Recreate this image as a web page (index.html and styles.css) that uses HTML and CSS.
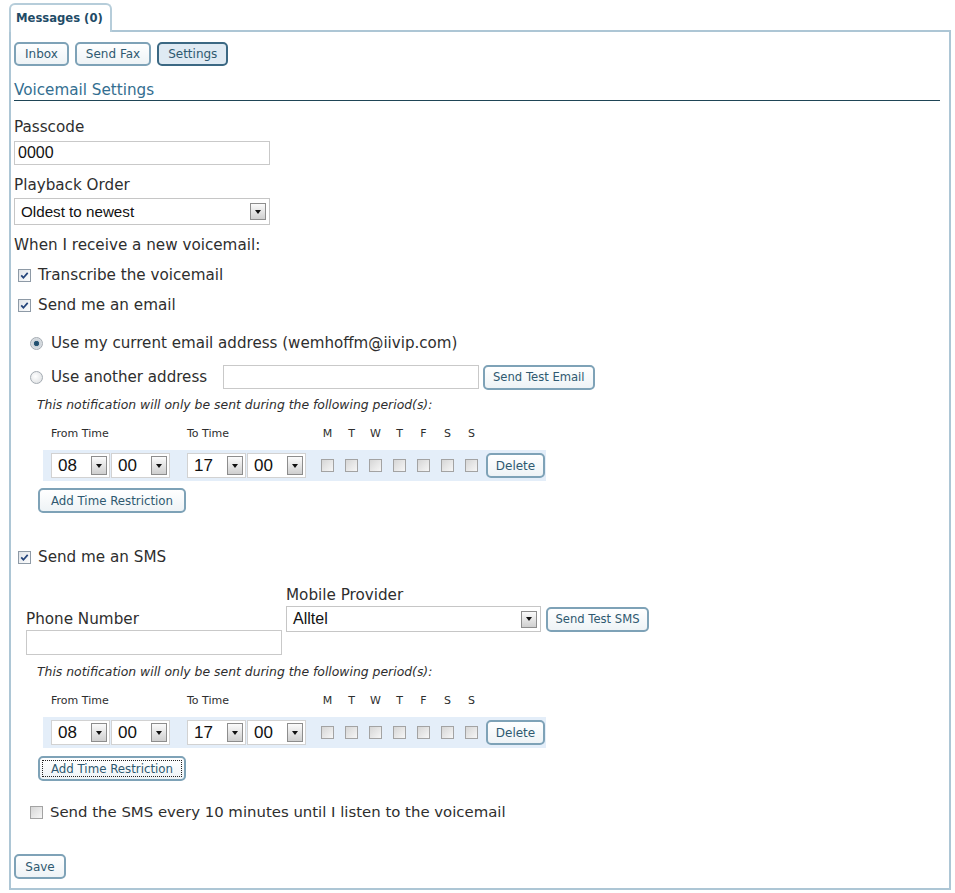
FILE: index.html
```html
<!DOCTYPE html>
<html>
<head>
<meta charset="utf-8">
<title>Voicemail Settings</title>
<link rel="stylesheet" href="styles.css">
</head>
<body>
<div class="page">
  <div class="tabs"><div class="tab">Messages (0)</div></div>
  <div class="panel">
    <div class="subnav">
      <button class="btn">Inbox</button>
      <button class="btn">Send Fax</button>
      <button class="btn active">Settings</button>
    </div>
    <h2 class="section-title">Voicemail Settings</h2>

    <div class="lbl mt16">Passcode</div>
    <div class="textbox mt4 tb-pass">0000</div>
    <div class="lbl mt10">Playback Order</div>
    <div class="select mt3 sel-play"><span>Oldest to newest</span><span class="arrow"><i></i></span></div>
    <div class="lbl mt10">When I receive a new voicemail:</div>

    <div class="cbrow mt10 pl4"><span class="cb"><svg viewBox="0 0 13 13" width="13" height="13"><path d="M3.2 6.4 L5.4 8.7 L9.7 3.9" fill="none" stroke="#23437a" stroke-width="1.7"/></svg></span><span class="cbtext">Transcribe the voicemail</span></div>
    <div class="cbrow mt10 pl4"><span class="cb"><svg viewBox="0 0 13 13" width="13" height="13"><path d="M3.2 6.4 L5.4 8.7 L9.7 3.9" fill="none" stroke="#23437a" stroke-width="1.7"/></svg></span><span class="cbtext">Send me an email</span></div>

    <div class="radiogroup">
      <div class="cbrow mt18"><span class="rb on"></span><span class="rtext">Use my current email address (wemhoffm@iivip.com)</span></div>
      <div class="cbrow row2 mt11"><span class="rb"></span><span class="rtext rfix">Use another address</span><div class="textbox tb-other"></div><button class="btn sm">Send Test Email</button></div>
    </div>

    <div class="note mt7">This notification will only be sent during the following period(s):</div>
    <div class="timeblock">
      <div class="thead mt13"><span class="h-from">From Time</span><span class="h-to">To Time</span><span class="d">M</span><span class="d">T</span><span class="d">W</span><span class="d">T</span><span class="d">F</span><span class="d">S</span><span class="d">S</span></div>
      <div class="trow mt8">
        <div class="tsel"><span>08</span><span class="arrow"><i></i></span></div>
        <div class="tsel g1"><span>00</span><span class="arrow"><i></i></span></div>
        <div class="tsel g17"><span>17</span><span class="arrow"><i></i></span></div>
        <div class="tsel g1"><span>00</span><span class="arrow"><i></i></span></div>
        <span class="cb off first"></span><span class="cb off"></span><span class="cb off"></span><span class="cb off"></span><span class="cb off"></span><span class="cb off"></span><span class="cb off"></span>
        <button class="btn del">Delete</button>
      </div>
    </div>
    <button class="btn add mt7">Add Time Restriction</button>

    <div class="cbrow mt34 pl4"><span class="cb"><svg viewBox="0 0 13 13" width="13" height="13"><path d="M3.2 6.4 L5.4 8.7 L9.7 3.9" fill="none" stroke="#23437a" stroke-width="1.7"/></svg></span><span class="cbtext">Send me an SMS</span></div>

    <div class="smsfields mt18">
      <div class="cell phone">
        <div class="lbl">Phone Number</div>
        <div class="textbox tb-phone"></div>
      </div>
      <div class="cell provider">
        <div class="lbl">Mobile Provider</div>
        <div class="provrow">
          <div class="select sel-prov"><span>Alltel</span><span class="arrow"><i></i></span></div>
          <button class="btn sm sms">Send Test SMS</button>
        </div>
      </div>
    </div>

    <div class="note mt9">This notification will only be sent during the following period(s):</div>
    <div class="timeblock">
      <div class="thead mt13"><span class="h-from">From Time</span><span class="h-to">To Time</span><span class="d">M</span><span class="d">T</span><span class="d">W</span><span class="d">T</span><span class="d">F</span><span class="d">S</span><span class="d">S</span></div>
      <div class="trow mt8">
        <div class="tsel"><span>08</span><span class="arrow"><i></i></span></div>
        <div class="tsel g1"><span>00</span><span class="arrow"><i></i></span></div>
        <div class="tsel g17"><span>17</span><span class="arrow"><i></i></span></div>
        <div class="tsel g1"><span>00</span><span class="arrow"><i></i></span></div>
        <span class="cb off first"></span><span class="cb off"></span><span class="cb off"></span><span class="cb off"></span><span class="cb off"></span><span class="cb off"></span><span class="cb off"></span>
        <button class="btn del">Delete</button>
      </div>
    </div>
    <button class="btn add focused mt8"><span class="focusring">Add Time Restriction</span></button>

    <div class="cbrow mt21 pl16"><span class="cb off"></span><span class="cbtext wide">Send the SMS every 10 minutes until I listen to the voicemail</span></div>

    <button class="btn save mt32">Save</button>
  </div>
</div>
</body>
</html>
```

FILE: styles.css
```css
* { box-sizing: border-box; }
html, body { margin: 0; padding: 0; background: #fff; }
body {
  font-family: "DejaVu Sans", "Noto Sans", sans-serif;
  color: #2e2e2e;
}
.page { padding: 3px 4px 0 9px; width: 955px; }

.tabs { display: flex; height: 27px; position: relative; z-index: 1; }
.tab {
  width: 103px; height: 29px;
  border: 2px solid #b6cdda; border-bottom: none;
  border-radius: 6px 6px 0 0;
  background: #fff;
  font-weight: bold; font-size: 11.6px; color: #1f4c67;
  padding-left: 5px; line-height: 26px; white-space: nowrap;
}

.panel {
  border: 2px solid #adc6d5;
  padding: 10px 9px 9px 3px;
}

.mt3 { margin-top: 3px; } .mt4 { margin-top: 4px; } .mt7 { margin-top: 7px; }
.mt8 { margin-top: 8px; } .mt9 { margin-top: 9px; } .mt10 { margin-top: 10px; }
.mt11 { margin-top: 11px; } .mt13 { margin-top: 13px; } .mt16 { margin-top: 16px; }
.mt18 { margin-top: 18px; } .mt21 { margin-top: 21px; } .mt32 { margin-top: 32px; }
.mt34 { margin-top: 34px; }
.pl4 { padding-left: 4px; } .pl16 { padding-left: 16px; }

.subnav { display: flex; gap: 6px; }
.btn {
  display: inline-flex; align-items: center; justify-content: center;
  height: 24px; padding: 0 9px;
  border: 2px solid #7ea2b7; border-radius: 5px;
  background: linear-gradient(#ffffff, #eef3f6);
  font-family: "DejaVu Sans", sans-serif; font-size: 12px; color: #2f5970;
  cursor: pointer;
}
.btn.active { border-color: #3b6883; background: #dfeaf3; }
.btn.sm { height: 25px; font-size: 11.6px; padding: 0 8px; }

.section-title {
  margin: 14px 0 0; font-weight: normal;
  font-size: 15.2px; line-height: 20px; color: #336e90;
  border-bottom: 1px solid #1f4556;
}

.lbl { font-size: 15.2px; line-height: 20px; }

.textbox {
  border: 1px solid #c9c9c9; background: #fff;
  font-family: "Liberation Sans", Arial, sans-serif; font-size: 16px;
  height: 24px; line-height: 22px; padding-left: 3px; color: #111;
}
.tb-pass { width: 256px; }
.tb-other { width: 256px; height: 24px; }
.tb-phone { width: 256px; height: 25px; margin-top: 1px; }

.select {
  display: flex; align-items: center; justify-content: space-between;
  border: 1px solid #c6c6c6; background: #fff;
  font-family: "Liberation Sans", Arial, sans-serif; color: #111;
}
.sel-play { width: 256px; height: 27px; font-size: 15.2px; padding: 0 3px 0 6px; }
.sel-prov { width: 255px; height: 26px; font-size: 16px; padding: 0 3px 0 6px; }
.arrow {
  width: 16px; height: 17px; flex: none;
  border: 1px solid #8d8d8d;
  background: linear-gradient(#fbfbfb, #cfcfcf);
  display: flex; align-items: center; justify-content: center;
}
.arrow i {
  width: 0; height: 0;
  border-left: 3.5px solid transparent; border-right: 3.5px solid transparent;
  border-top: 4px solid #111;
}

.cbrow { display: flex; align-items: center; height: 20px; }
.cb {
  width: 13px; height: 13px; flex: none;
  border: 1px solid #8e9aa6;
  background: linear-gradient(135deg, #dfe3e8, #fdfdfd);
  display: inline-flex; align-items: center; justify-content: center;
}
.cb svg { display: block; margin: -1px; }
.cb.off { border-color: #a3a3a3; background: linear-gradient(135deg, #d6d6d6, #f6f6f6); }
.cbtext { margin-left: 7px; font-size: 15.2px; line-height: 20px; }
.cbtext.wide { margin-left: 7px; font-size: 14.9px; }

.radiogroup { padding-left: 16px; }
.rb {
  width: 13px; height: 13px; flex: none; border-radius: 50%;
  border: 1px solid #a4abb2;
  background: radial-gradient(circle at 40% 40%, #ffffff, #d9dcdf);
}
.rb.on { background: radial-gradient(circle, #1d4766 0, #2b5a78 2.3px, #c9d0d6 3px, #eef0f2 100%); }
.rtext { margin-left: 8px; font-size: 15.1px; line-height: 20px; }
.rfix { width: 172px; flex: none; }
.row2 { height: 26px; }
.row2 .btn { margin-left: 4px; }

.note { font-style: italic; font-size: 12.4px; line-height: 16px; margin-left: 23px; }

.timeblock { margin-left: 29px; }
.thead { display: flex; font-size: 11px; line-height: 16px; padding-left: 8px; }
.h-from { width: 136px; }
.h-to { width: 134px; }
.d { width: 13px; margin-right: 11px; text-align: center; }

.trow {
  display: flex; align-items: center;
  width: 503px; height: 31px;
  background: #e4eef9; padding-left: 8px;
}
.tsel {
  width: 59px; height: 25px; flex: none;
  display: flex; align-items: center; justify-content: space-between;
  border: 1px solid #d2d2d2; background: #fff;
  font-family: "Liberation Sans", Arial, sans-serif; font-size: 17px; color: #111;
  padding: 0 2px 0 6px;
}
.tsel .arrow { width: 16px; height: 19px; }
.g1 { margin-left: 1px; }
.g17 { margin-left: 17px; }
.trow .cb { margin-left: 11px; }
.trow .cb.first { margin-left: 15px; }
.btn.del { margin-left: 8px; width: 59px; height: 25px; padding: 0; font-size: 12px; }

.btn.add { margin-left: 24px; width: 148px; height: 25px; padding: 0; font-size: 11.8px; }
.btn.add.focused { padding: 2px; }
.focusring {
  display: flex; align-items: center; justify-content: center;
  width: 100%; height: 100%;
  outline: 1px dotted #222; outline-offset: -1px;
}

.smsfields { display: flex; align-items: flex-start; margin-left: 12px; }
.cell.phone { padding-top: 24px; width: 260px; }
.provrow { display: flex; align-items: center; margin-top: 1px; gap: 5px; }
.btn.sms { width: 103px; padding: 0; }

.btn.save { width: 52px; height: 25px; padding: 0; font-size: 12px; }
```
